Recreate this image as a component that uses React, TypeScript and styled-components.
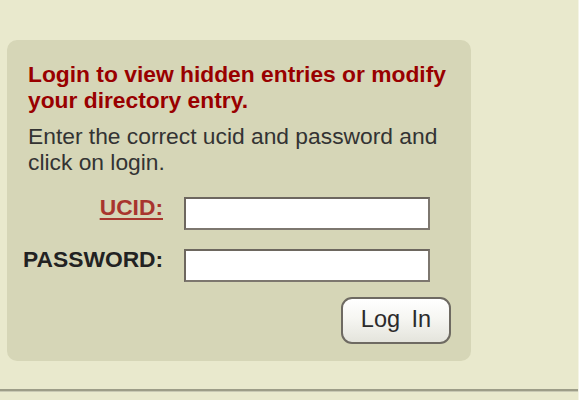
import React from "react";
import styled, { createGlobalStyle } from "styled-components";

const Global = createGlobalStyle`
  html, body {
    margin: 0;
    padding: 0;
    background: #f4f4e6;
  }
  body {
    font-family: "Liberation Sans", Arial, sans-serif;
  }
`;

const Page = styled.div`
  width: 578px;
  height: 400px;
  box-sizing: border-box;
  background: #e9e9cd;
  padding-top: 40px;
  padding-left: 7px;
  display: flex;
  flex-direction: column;
`;

const Panel = styled.form`
  width: 464px;
  height: 321px;
  box-sizing: border-box;
  background: #d6d6b7;
  border-radius: 10px;
  padding: 22px 20px 0 21px;
  display: flex;
  flex-direction: column;
`;

const Heading = styled.h2`
  margin: 0;
  font-size: 22.8px;
  line-height: 25.5px;
  font-weight: bold;
  color: #990000;
`;

const Intro = styled.p`
  margin: 11px 0 0 0;
  font-size: 22.8px;
  line-height: 25.5px;
  color: #333333;
`;

const FieldGrid = styled.div`
  margin: 22px 0 0 -5px;
  display: grid;
  grid-template-columns: 140px 246px;
  column-gap: 21px;
  row-gap: 19px;
  align-items: start;
`;

const Label = styled.label<{ $link?: boolean }>`
  font-size: 22.8px;
  line-height: 16px;
  padding-top: 2px;
  font-weight: bold;
  text-align: right;
  color: ${(p) => (p.$link ? "#a8352e" : "#222222")};
  text-decoration: ${(p) => (p.$link ? "underline" : "none")};
  text-underline-offset: 3px;
  text-decoration-thickness: 2px;
  white-space: nowrap;
`;

const TextInput = styled.input`
  width: 246px;
  height: 33px;
  box-sizing: border-box;
  margin: 0;
  background: #ffffff;
  border: 2px solid #6d675f;
  border-right-color: #7d776f;
  border-bottom-color: #7d776f;
  outline: none;
  font-size: 18px;
  padding: 2px 4px;
`;

const Actions = styled.div`
  margin-top: 15px;
  display: flex;
  justify-content: flex-end;
`;

const LoginButton = styled.button`
  width: 110px;
  height: 47px;
  box-sizing: border-box;
  border: 2px solid #6e6a62;
  border-radius: 11px;
  background: linear-gradient(#ffffff 0%, #f6f6f2 45%, #e4e4dc 100%);
  box-shadow: inset 0 1px 0 #ffffff;
  font-family: "Liberation Sans", Arial, sans-serif;
  font-size: 23.5px;
  color: #2b2b2b;
  word-spacing: 5px;
  padding: 0 0 2px 0;
  cursor: pointer;
`;

const Divider = styled.div`
  margin-top: 28px;
  margin-left: -7px;
  height: 1px;
  border-top: 2px solid #9d9d88;
  background: #c9c9b4;
`;

export default function App() {
  return (
    <>
      <Global />
      <Page>
        <Panel onSubmit={(e) => e.preventDefault()}>
          <Heading>
            Login to view hidden entries or modify your directory entry.
          </Heading>
          <Intro>
            Enter the correct ucid and password and click on login.
          </Intro>
          <FieldGrid>
            <Label $link htmlFor="ucid">UCID:</Label>
            <TextInput id="ucid" type="text" />
            <Label htmlFor="pw">PASSWORD:</Label>
            <TextInput id="pw" type="password" />
          </FieldGrid>
          <Actions>
            <LoginButton type="submit">Log In</LoginButton>
          </Actions>
        </Panel>
        <Divider />
      </Page>
    </>
  );
}
